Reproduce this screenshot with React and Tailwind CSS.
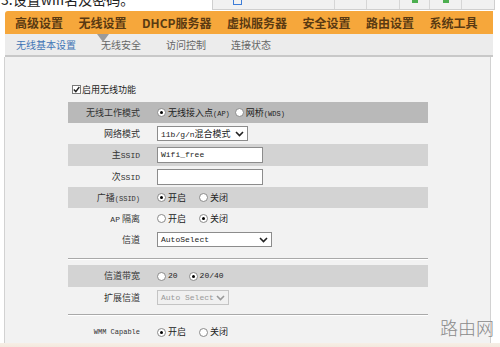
import React from 'react';

const cjk = { fontFamily: '"Noto Sans CJK SC", "Noto Sans", sans-serif' };
const mono = { fontFamily: '"Liberation Mono", "Noto Sans CJK SC", monospace' };

function Radio({ on }) {
  return (
    <span className="inline-flex items-center justify-center w-[9px] h-[9px] rounded-full border border-[#8a8a8a] bg-white mr-[2px]">
      {on && <span className="w-[3px] h-[3px] rounded-full bg-black" />}
    </span>
  );
}

function Row({ label, shade, dark, children, labelMono, h = 'h-[21px]' }) {
  const bg = dark ? 'bg-[#b9b9b9]' : shade ? 'bg-[#d3d3d3]' : '';
  return (
    <div className={`flex items-center ${h} ${bg}`}>
      <div
        className={`w-[72px] text-right text-[#333] ${labelMono ? 'text-[7px]' : 'text-[9px]'}`}
        style={labelMono ? mono : cjk}
      >
        {label}
      </div>
      <div className="flex items-center pl-[17px] text-[9px] text-[#222]" style={cjk}>
        {children}
      </div>
    </div>
  );
}

function Chevron({ color = '#222' }) {
  return (
    <svg width="9" height="6" viewBox="0 0 9 6" className="shrink-0">
      <path d="M1 1 L4.5 4.5 L8 1" fill="none" stroke={color} strokeWidth="1.6" />
    </svg>
  );
}

function Select({ w, text, disabled, cjkText }) {
  return (
    <div
      className={`flex items-center justify-between h-[15px] border px-[3px] ${
        disabled ? 'border-[#c4c4c4] bg-[#f0f0f0] text-[#999]' : 'border-[#8c8c8c] bg-white text-[#222]'
      }`}
      style={{ width: w }}
    >
      <span className="text-[8px] leading-none" style={mono}>
        {text}
        {cjkText && <span className="text-[9px]" style={cjk}>{cjkText}</span>}
      </span>
      <Chevron color={disabled ? '#999' : '#222'} />
    </div>
  );
}

function Input({ value }) {
  return (
    <div className="flex items-center w-[106px] h-[16px] border border-[#8c8c8c] bg-white px-[3px]">
      <span className="text-[8px] leading-none text-[#222]" style={mono}>{value}</span>
    </div>
  );
}

function Opt({ on, label, gap }) {
  return (
    <span className={`inline-flex items-center ${gap || ''}`}>
      <Radio on={on} />
      {label}
    </span>
  );
}

export default function App() {
  const nav = ['高级设置', '无线设置', 'DHCP服务器', '虚拟服务器', '安全设置', '路由设置', '系统工具'];
  const sub = ['无线基本设置', '无线安全', '访问控制', '连接状态'];

  return (
    <div className="relative w-[500px] h-[347px] overflow-hidden bg-white" style={cjk}>
      {/* top strip, text is cut off in the shot */}
      <div className="flex h-[11px] overflow-hidden">
        <div className="w-[212px] overflow-hidden">
          <div className="-mt-[10px] pl-[1px] text-[14px] text-[#222] leading-[18px] whitespace-nowrap">
            3.设置wifi名及密码。
          </div>
        </div>
        <div className="flex flex-1 h-[10px] mr-[5px] bg-[#f1f1f1] border-x border-b border-[#cfcfcf]">
          <div className="w-[122px] border-r border-[#d6d6d6] pl-[20px]">
            <div className="w-[9px] h-[5px] border-x border-b border-[#3d7dd8]" />
          </div>
          <div className="w-[32px] border-r border-[#d6d6d6]" />
          <div className="w-[33px] border-r border-[#d6d6d6]" />
          <div className="w-[30px] border-r border-[#d6d6d6] flex justify-center">
            <div className="w-[6px] h-[3px] bg-[#4caf50]" />
          </div>
          <div className="w-[32px] border-r border-[#d6d6d6] flex justify-center">
            <div className="w-[6px] h-[3px] bg-[#4caf50]" />
          </div>
          <div className="flex-1" />
        </div>
      </div>

      {/* main nav */}
      <div className="ml-[5px] w-[488px] h-[23px] bg-[#f6a73b] rounded-tl-[3px] flex items-center pl-[10px] gap-[15.5px]">
        {nav.map((n) => (
          <span key={n} className="text-[12px] font-semibold text-[#5a3a12] whitespace-nowrap leading-none">
            {n}
          </span>
        ))}
      </div>

      {/* sub nav */}
      <div className="relative ml-[5px] w-[488px] h-[23px] bg-[#ececec] border-b-2 border-[#c8c8c8] flex items-center pl-[11px] gap-[25px]">
        <div className="absolute left-[92px] top-0 w-0 h-0 border-l-[6px] border-r-[6px] border-t-[8px] border-l-transparent border-r-transparent border-t-[#9b9b9b]" />
        {sub.map((s, i) => (
          <span key={s} className={`text-[10px] leading-none ${i === 0 ? 'text-[#3f74b5]' : 'text-[#666]'}`}>
            {s}
          </span>
        ))}
      </div>

      {/* content panel */}
      <div className="ml-[4px] w-[487px] h-[286px] overflow-hidden bg-[#f2f2f2] border-x border-[#d2d2d2] pt-[28px] pl-[63px]">
        <div className="w-[360px]">
          <div className="flex items-center h-[9px] pl-[4px] mb-[8px]">
            <span className="flex items-center justify-center w-[9px] h-[9px] border border-[#7a7a7a] bg-white mr-[1px]">
              <svg width="7" height="7" viewBox="0 0 7 7">
                <path d="M0.8 3.6 L2.8 5.6 L6.3 1" fill="none" stroke="#222" strokeWidth="1.4" />
              </svg>
            </span>
            <span className="text-[9px] text-[#222]">启用无线功能</span>
          </div>

          <Row label="无线工作模式" dark>
            <Opt on label={<span>无线接入点<span className="text-[7px]" style={mono}>(AP)</span></span>} />
            <Opt label={<span>网桥<span className="text-[7px]" style={mono}>(WDS)</span></span>} gap="ml-[5px]" />
          </Row>
          <Row label="网络模式">
            <Select w="91px" text="11b/g/n" cjkText="混合模式" />
          </Row>
          <Row label={<span>主<span style={mono} className="text-[8px]">SSID</span></span>} shade h="h-[22px]">
            <Input value="Wifi_free" />
          </Row>
          <Row label={<span>次<span style={mono} className="text-[8px]">SSID</span></span>}>
            <Input value="" />
          </Row>
          <Row label={<span>广播<span style={mono} className="text-[7px]">(SSID)</span></span>} shade>
            <Opt on label="开启" />
            <Opt label="关闭" gap="ml-[13px]" />
          </Row>
          <Row label={<span><span style={mono} className="text-[8px]">AP</span> 隔离</span>}>
            <Opt label="开启" />
            <Opt on label="关闭" gap="ml-[13px]" />
          </Row>
          <Row label="信道">
            <Select w="115px" text="AutoSelect" />
          </Row>

          <div className="mt-[8px] h-[2px] bg-[#a9a9a9] border-b border-white" />

          <div className="mt-[5px]">
            <Row label="信道带宽" shade h="h-[22px]">
              <Opt label={<span style={mono} className="text-[8px]">20</span>} />
              <Opt on label={<span style={mono} className="text-[8px]">20/40</span>} gap="ml-[11px]" />
            </Row>
            <Row label="扩展信道">
              <Select w="72px" text="Auto Select" disabled />
            </Row>
          </div>

          <div className="mt-[6px] h-[2px] bg-[#a9a9a9] border-b border-white" />

          <div className="mt-[7px]">
            <Row label="WMM Capable" labelMono h="h-[18px]">
              <Opt on label="开启" />
              <Opt label="关闭" gap="ml-[13px]" />
            </Row>
          </div>
        </div>
      </div>

      <div className="h-[6px] bg-gradient-to-b from-[#f7efe6] to-[#f1e6da]" />

      {/* watermark */}
      <div className="absolute left-[440px] top-[318px] text-[18px] font-light text-[#8a8a8a] leading-none">
        路由网
      </div>
    </div>
  );
}
